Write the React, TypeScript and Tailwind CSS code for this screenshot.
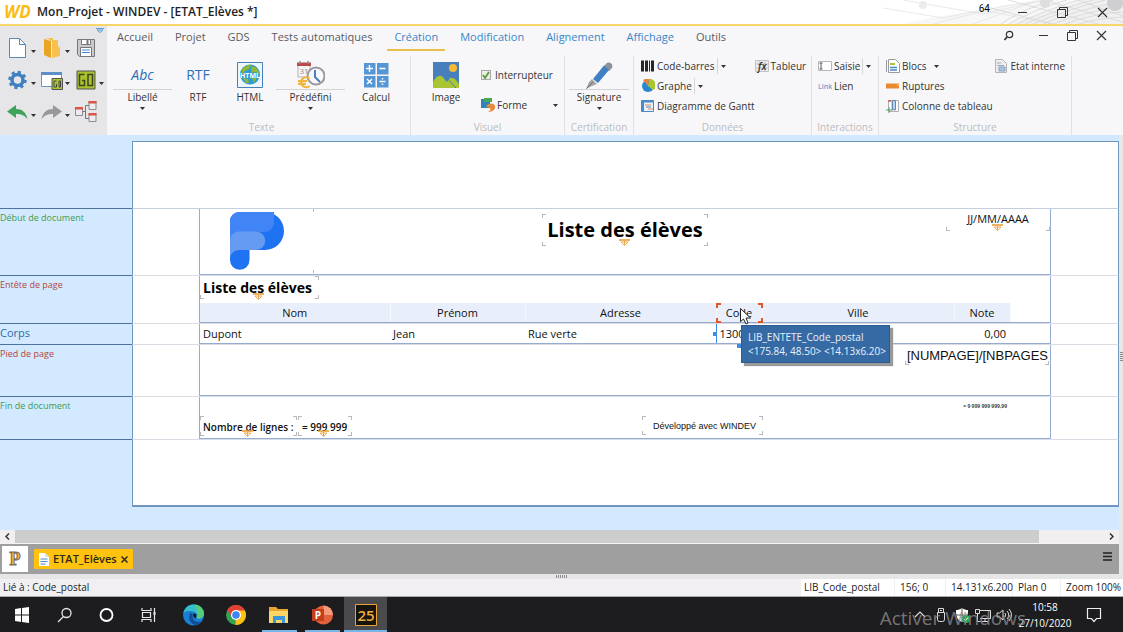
import type { ReactNode } from "react";
import clsx from "clsx";

const TABS = [
  { label: "Accueil" },
  { label: "Projet" },
  { label: "GDS" },
  { label: "Tests automatiques" },
  { label: "Création", context: true, active: true },
  { label: "Modification", context: true },
  { label: "Alignement", context: true },
  { label: "Affichage", context: true },
  { label: "Outils" },
];

function Caret({ className }: { className?: string }) {
  return (
    <svg viewBox="0 0 5 3" className={clsx("h-[3px] w-[5px] shrink-0", className)}>
      <path d="M0 0h5L2.500 3z" fill="#333" />
    </svg>
  );
}

function WindowButtons({ className }: { className?: string }) {
  return (
    <div className={clsx("flex items-center text-[#333]", className)}>
      <button aria-label="Réduire" className="flex flex-1 justify-center">
        <svg viewBox="0 0 11 11" className="size-[11px]" stroke="currentColor" fill="none">
          <path d="M1 5.500h9" />
        </svg>
      </button>
      <button aria-label="Restaurer" className="flex flex-1 justify-center">
        <svg viewBox="0 0 11 11" className="size-[11px]" stroke="currentColor" fill="none">
          <path d="M.5 2.500h8v8h-8zM2.500 2.500v-2h8v8h-2" />
        </svg>
      </button>
      <button aria-label="Fermer" className="flex flex-1 justify-center">
        <svg viewBox="0 0 11 11" className="size-[11px]" stroke="currentColor" fill="none">
          <path d="M1 1l9 9M10 1l-9 9" strokeWidth="1.200" />
        </svg>
      </button>
    </div>
  );
}

function TitleBar() {
  return (
    <header className="relative flex h-[26px] items-center border-b-2 border-[#f5d56c] bg-white pl-1">
      <svg viewBox="0 0 240 24" className="absolute top-0 right-0 h-6 w-[240px]" fill="none" stroke="#e3e3e5" strokeWidth=".8">
        <path d="M20 24C60 14 120 8 150 0h90v24z" fill="#f7f7f8" stroke="none" />
        <path d="M130 24C150 14 180 8 200 0h40v24z" fill="#f0f0f1" stroke="none" />
        <path d="M0 8l60 10 40-8 70 14M20 0l80 14 60-14M50 24l70-18 50-6M90 24L150 2" />
        <path d="M118 24q20-14 52-24M126 24q24-14 58-24M134 24q28-14 62-24M142 24q30-14 68-24M150 24q32-14 72-24M160 24q32-14 76-22M170 24q32-12 70-18M182 24q26-10 58-12M196 24q20-6 44-7M100 6l70 18M125 0l90 24M160 0l80 22M195 0l45 16" stroke="#d6d6d8" />
        <circle cx="232" cy="3" r="8" fill="#cfcfd1" stroke="none" />
        <circle cx="162" cy="3" r="5" fill="#dededf" stroke="none" />
        <circle cx="40" cy="5" r="4" fill="#ececee" stroke="none" />
      </svg>
      <span className="w-[33px] text-[17px] leading-6 font-bold text-[#fbbc14] italic">WD</span>
      <h1 className="flex-1 text-[12px] font-semibold text-[#222]">Mon_Projet - WINDEV - [ETAT_Elèves *]</h1>
      <span className="relative mr-3 mb-2 font-['Roboto'] text-[10px] text-black">64</span>
      <WindowButtons className="relative w-[121px] pr-px" />
    </header>
  );
}

function QuickItem({ label, caret, children }: { label: string; caret?: boolean; children: ReactNode }) {
  return (
    <button aria-label={label} className="flex items-center gap-[2px]">
      <svg viewBox="0 0 22 22" className="size-[22px]" fill="none">
        {children}
      </svg>
      {caret && <Caret className="mt-[6px]" />}
    </button>
  );
}

function QuickPanel() {
  return (
    <div className="relative w-[107px] shrink-0 bg-[#e6e6e9] pt-[11px] pl-[7px]">
      <svg viewBox="0 0 8 5" className="absolute top-[2px] right-[3px] h-[5px] w-2" fill="none">
        <path d="M0 .5h8M1 2h6L4 4.500z" stroke="#5a9bd8" />
      </svg>
      <div className="grid grid-cols-[34px_34px_34px] gap-y-[10px]">
        <QuickItem label="Nouveau" caret>
          <path d="M2.500 1.500h10l6 6v13h-16z" fill="#fff" stroke="#5a87bb" />
          <path d="M12.500 1.500v6h6" stroke="#5a87bb" />
        </QuickItem>
        <QuickItem label="Ouvrir" caret>
          <path d="M3 2l7 2v17l-7-3z" fill="#e9a426" />
          <path d="M5 1h7v2h5v6l2 2v8l-8 2V4z" fill="#f7c14f" />
        </QuickItem>
        <QuickItem label="Enregistrer">
          <path d="M2.500 2.500h17v17h-15l-2-2z" fill="#c9c9cc" stroke="#77777b" />
          <path d="M6.500 2.500h9v5h-9zM5.500 10.500h11v9h-11z" fill="#fff" stroke="#77777b" />
          <path d="M12.500 3v4" stroke="#77777b" strokeWidth="2" />
          <path d="M7 13h8M7 15.500h8" stroke="#4a86c5" />
        </QuickItem>
        <QuickItem label="Options" caret>
          <circle cx="10.500" cy="11" r="5.500" stroke="#3e80c0" strokeWidth="3.500" />
          <circle cx="10.500" cy="11" r="8" stroke="#3e80c0" strokeWidth="2.500" strokeDasharray="3.140 3.140" />
        </QuickItem>
        <QuickItem label="Tester la fenêtre" caret>
          <path d="M.5 3.500h20v14H.5z" fill="#fff" stroke="#6f93bd" />
          <path d="M0 3h21v3H0z" fill="#5d8fc6" />
          <path d="M11 9.500h10.500v11H11z" fill="#a8c62f" stroke="#555" />
          <path d="M15.500 12H13v6h2.500v-3M18 12h1.500v6H18z" stroke="#444" />
        </QuickItem>
        <QuickItem label="Tester le projet" caret>
          <path d="M2 2h18v18H2z" fill="#a9c32c" stroke="#555" />
          <path d="M9.500 5.500h-5v11h5v-5H7M13 5.500h4.500v11H13z" stroke="#3f431f" strokeWidth="1.500" />
        </QuickItem>
        <QuickItem label="Annuler" caret>
          <path d="M0 10.500L9 4v4c6 0 10 3 11.500 10C17 14 14 13 9 13v4z" fill="#3fa35a" />
        </QuickItem>
        <QuickItem label="Rétablir" caret>
          <path d="M21 10.500L12 4v4C6 8 2 11 .5 18 4 14 7 13 12 13v4z" fill="#98989b" />
        </QuickItem>
        <QuickItem label="Arborescence">
          <path d="M.5 6.500h7v8h-7zM14 .5h7v8h-7zM14 12.500h7v8h-7z" fill="#ececee" stroke="#8c8c90" />
          <path d="M0 6h8v2.500H0zM13.500 0h8v2.500h-8zM13.500 12h8v2.500h-8z" fill="#dd5346" />
          <path d="M8 10.500h2.500M14 4.500h-3.500v13h3.500" stroke="#777" />
        </QuickItem>
      </div>
    </div>
  );
}

type BigButtonProps = { label: string; caret?: boolean; className?: string; children: ReactNode };

function BigButton({ label, caret, className, children }: BigButtonProps) {
  return (
    <button className={clsx("flex flex-col items-center pt-1 text-[10px] text-[#333]", className)}>
      <span
        className={clsx(
          "flex h-[30px] w-full items-center justify-center border-b",
          caret ? "border-[#d3d3d6]" : "border-transparent",
        )}
      >
        {children}
      </span>
      <span className="leading-[14px]">{label}</span>
      {caret && <Caret className="mt-[3px]" />}
    </button>
  );
}

function SmallButton({ label, caret, split, className, children }: BigButtonProps & { split?: boolean }) {
  return (
    <button className={clsx("flex h-5 items-center gap-[2px] text-[10px] whitespace-nowrap text-[#333]", className)}>
      <svg viewBox="0 0 14 14" className="size-[14px] shrink-0" fill="none">
        {children}
      </svg>
      <span>{label}</span>
      {caret && (
        <span className={clsx("flex h-4 items-center pl-[3px]", split ? "border-l border-[#d5d5d8]" : "ml-[2px]")}>
          <Caret />
        </span>
      )}
    </button>
  );
}

function Group({ title, className, children }: { title: string; className?: string; children: ReactNode }) {
  return (
    <section className={clsx("flex flex-col border-r border-[#e1e1e4]", className)}>
      <div className="flex h-16">{children}</div>
      <h2 className="text-center text-[10px] leading-[14px] text-[#bcbcc0]">{title}</h2>
    </section>
  );
}

function Ribbon() {
  return (
    <div className="flex h-[109px] bg-[#f7f7f9]">
      <QuickPanel />
      <div className="min-w-0 flex-1">
        <div className="flex h-[26px] items-start">
          <nav className="flex flex-1 gap-2 pl-[3px]">
            {TABS.map((tab) => (
              <a
                key={tab.label}
                href="#"
                className={clsx(
                  "h-[25px] border-b-2 px-[7px] text-[11px] leading-[22px] whitespace-nowrap",
                  tab.active ? "border-[#e8bf4d]" : "border-transparent",
                  tab.context ? "text-[#3a85c8]" : "text-[#5b5b5f]",
                )}
              >
                {tab.label}
              </a>
            ))}
          </nav>
          <button aria-label="Rechercher" className="mt-1 mr-[15px]">
            <svg viewBox="0 0 11 11" className="size-[11px]" fill="none" stroke="#333" strokeWidth="1.200">
              <circle cx="6.500" cy="4.500" r="3.200" />
              <path d="M4 7L1.500 10" strokeWidth="1.800" />
            </svg>
          </button>
          <WindowButtons className="w-[94px] pt-1 pr-[7px]" />
        </div>
        <div className="flex h-[83px] pt-1">
          <Group title="Texte" className="w-[304px] pl-[6px]">
            <BigButton label="Libellé" caret className="w-[59px]">
              <span className="text-sm text-[#2f6fb7] italic">Abc</span>
            </BigButton>
            <BigButton label="RTF" className="w-[52px]">
              <span className="text-sm text-[#2f6fb7]">RTF</span>
            </BigButton>
            <BigButton label="HTML" className="w-[52px]">
              <svg viewBox="0 0 26 26" className="size-[26px]">
                <path d="M.5.5h25v25H.5z" fill="#eef6fc" stroke="#477fb8" />
                <circle cx="13" cy="12.500" r="10" fill="#2f9ad6" />
                <path d="M5 7c3-4 8-5 9-4l-2 4-4 2-3 3zM15 4c5 1 7 5 7 8l-4-2-3 1-1-4zM6 16l5 1 1 4-3 0zM15 16l5-1-3 6z" fill="#8fb935" />
                <text x="13" y="15.500" textAnchor="middle" fontSize="7" fontWeight="700" fill="#fff">HTML</text>
              </svg>
            </BigButton>
            <BigButton label="Prédéfini" caret className="w-[69px]">
              <svg viewBox="0 0 28 28" className="size-7" fill="none">
                <path d="M1 3h12v13H1z" fill="#f5f5f5" stroke="#b5b5b8" />
                <path d="M0 1.500h14v3.500H0z" fill="#b94a48" />
                <path d="M3 0v3M11 0v3" stroke="#8a8a8e" strokeWidth="1.500" />
                <text x="7" y="12.500" textAnchor="middle" fontSize="8" fill="#8b8b90">31</text>
                <circle cx="19" cy="15" r="8.500" fill="#f8f8fa" stroke="#9a9a9f" strokeWidth="2" />
                <path d="M18 9v7l5 5" stroke="#4a80bd" strokeWidth="2" />
                <path d="M12.500 17.500A5 5 0 1 0 12.500 25M1 20h9M1 22.800h8" stroke="#f2b33a" strokeWidth="2.200" />
              </svg>
            </BigButton>
            <BigButton label="Calcul" className="w-[62px]">
              <svg viewBox="0 0 26 26" className="size-[26px]" fill="none">
                <path d="M1 1h11.500v11.500H1zM14 1h11.500v11.500H14zM1 14h11.500v11.500H1zM14 14h11.500v11.500H14z" fill="#5596d6" />
                <path d="M6.500 3v7M3 6.500h7M16.500 6.500h6M4 17l5 5M9 17l-5 5M16.500 19.500h6M19.500 16v1.500M19.500 21.500V23" stroke="#fff" strokeWidth="1.400" />
              </svg>
            </BigButton>
          </Group>
          <Group title="Visuel" className="w-[154px]">
            <BigButton label="Image" className="w-[70px]">
              <svg viewBox="0 0 26 26" className="size-[26px]">
                <path d="M0 0h26v26H0z" fill="#477fbd" />
                <circle cx="20" cy="6" r="4" fill="#f5b933" />
                <path d="M0 26v-6c4-8 9-8 12-2l2 2c3-6 7-6 12 2v4z" fill="#a9c531" />
                <path d="M14 16l9 10" stroke="#477fbd" />
              </svg>
            </BigButton>
            <div className="flex flex-1 flex-col justify-between pt-[9px] pb-[5px]">
              <label className="flex h-5 items-center gap-1 text-[10px] text-[#333]">
                <span className="relative flex size-[10px]">
                  <input type="checkbox" defaultChecked className="size-[10px] appearance-none border border-[#a9a9ad] bg-[#e8eee2]" />
                  <svg viewBox="0 0 10 10" className="pointer-events-none absolute inset-0" fill="none">
                    <path d="M2 5l2 3 4-6" stroke="#5c9a3a" strokeWidth="1.800" />
                  </svg>
                </span>
                Interrupteur
              </label>
              <div className="flex items-center justify-between pr-[6px]">
                <SmallButton label="Forme">
                  <path d="M0 1h9v9H0z" fill="#2d82c0" />
                  <path d="M3 0h8v4H3z" fill="#4aa653" />
                  <path d="M5 9c1-4 8-5 9-1s-3 6-7 6c4-2 3-5-2-5z" fill="#e9893a" />
                </SmallButton>
                <Caret />
              </div>
            </div>
          </Group>
          <Group title="Certification" className="w-[69px] px-1">
            <BigButton label="Signature" caret className="w-full">
              <svg viewBox="0 0 28 28" className="size-7">
                <path d="M21 3c2-3 8-1 6 4l-3 3-6-4z" fill="#8f9297" />
                <path d="M19 4.500l5 4.500-11 13-5-4z" fill="#3f7fc3" />
                <path d="M7 18l5 5-5 2-6 3 3-7z" fill="#a3a5a9" />
                <path d="M1.500 27.500L8 21" stroke="#6d6f73" />
              </svg>
            </BigButton>
          </Group>
          <Group title="Données" className="w-[178px] pl-[7px] [&>h2]:-ml-[7px]">
            <div className="flex flex-col">
              <SmallButton label="Code-barres" caret split>
                <path d="M0 1.500h3v11H0zM4 1.500h3v11H4zM8 1.500h1v11H8zM10 1.500h3v11h-3z" fill="#26262a" />
              </SmallButton>
              <SmallButton label="Graphe" caret split>
                <circle cx="7" cy="7" r="6" fill="#2488cf" />
                <path d="M7 7l1-7A6 6 0 0 1 12 11z" fill="#a9c531" />
                <path d="M7 7L2 1a8 8 0 0 1 6-1z" fill="#ee8133" />
              </SmallButton>
              <SmallButton label="Diagramme de Gantt">
                <path d="M.5 1.500h12v11H.5z" fill="#e8f2fb" stroke="#4c8ac6" />
                <path d="M.5 2.500h12M2 1v12" stroke="#4c8ac6" strokeWidth="2" />
                <path d="M4 6h6M7 10h5" stroke="#e58a54" />
                <path d="M5 8h5" stroke="#4c8ac6" />
              </SmallButton>
            </div>
            <SmallButton label="Tableur" className="ml-auto pr-[6px]">
              <path d="M.5 1.500h13v11H.5zM.5 5h13M.5 9h13M4 1.500v11M10 1.500v11" fill="#eee" stroke="#c3c3c6" />
              <text x="3" y="11" fontSize="10" fontStyle="italic" fontWeight="600" fill="#333">fx</text>
            </SmallButton>
          </Group>
          <Group title="Interactions" className="w-[67px] pl-[6px] [&>h2]:-ml-[6px]">
            <div className="flex flex-col">
              <SmallButton label="Saisie" caret split>
                <path d="M.5 2.500h13v9H.5z" fill="#fff" stroke="#b7b7bb" />
                <path d="M1.500 4h3M3 4v6M1.500 10h3" stroke="#555" />
              </SmallButton>
              <SmallButton label="Lien">
                <text x="0" y="10" fontSize="7" fontWeight="600" fill="#6fa0d6">Link</text>
              </SmallButton>
            </div>
          </Group>
          <Group title="Structure" className="w-[193px] pl-[7px] [&>h2]:-ml-[7px]">
            <div className="flex flex-col">
              <SmallButton label="Blocs" caret>
                <path d="M.5 1v12M2.500 .5h7l4 4v9h-11z" fill="#fff" stroke="#9a9a9f" />
                <path d="M4 5h5" stroke="#a9c531" strokeWidth="2" />
                <path d="M4 8.500h7M4 11h7" stroke="#4a86c5" strokeWidth="1.500" />
              </SmallButton>
              <SmallButton label="Ruptures">
                <path d="M0 4.500h13v5H0z" fill="#e98a2e" />
                <path d="M11 6h2" stroke="#f7d08c" />
              </SmallButton>
              <SmallButton label="Colonne de tableau">
                <path d="M2.500 1.500h10v11h-10zM6 1v11M9 1v11" fill="#fff" stroke="#b0b0b5" />
                <path d="M6.500 1.500h3v9h-3z" fill="#bcd6ef" stroke="#5a86b8" />
                <path d="M3 8v6M0 11h6" stroke="#58a05e" />
                <path d="M2 2h3" stroke="#d05a4a" strokeWidth="1.500" />
              </SmallButton>
            </div>
            <SmallButton label="Etat interne" className="ml-auto pr-[6px]">
              <path d="M1.500 .5h7l4 4v9h-11z" fill="#eee" stroke="#b4b4b8" />
              <path d="M3 4h4M3 6.500h7" stroke="#98a8bc" />
              <path d="M5 8h6v4H5z" fill="#a9c3e2" stroke="#8aa0ba" />
            </SmallButton>
          </Group>
        </div>
      </div>
    </div>
  );
}

// Orange "extensible height" mark under a report field
function StretchMark({ className }: { className?: string }) {
  return (
    <svg viewBox="0 0 11 7" className={clsx("absolute h-[7px] w-[11px]", className)} fill="none" stroke="#e6982c">
      <path d="M0 1h11" strokeWidth="1.500" />
      <path d="M2 3h7L5.500 6.500zM5.500 2v4" strokeWidth=".8" />
    </svg>
  );
}

type FieldProps = { className: string; corners?: string; selected?: boolean; children?: ReactNode };

// Report field with the small corner ticks drawn by the editor
function Field({ className, corners = "tl tr bl br", selected, children }: FieldProps) {
  const tick = clsx("absolute", selected ? "size-[5px] border-[#e0562b]" : "size-1 border-[#b9b9bd]");
  return (
    <div className={clsx("absolute whitespace-nowrap", className)}>
      {corners.includes("tl") && <i className={clsx(tick, "top-0 left-0", selected ? "border-t-2 border-l-2" : "border-t border-l")} />}
      {corners.includes("tr") && <i className={clsx(tick, "top-0 right-0", selected ? "border-t-2 border-r-2" : "border-t border-r")} />}
      {corners.includes("bl") && <i className={clsx(tick, "bottom-0 left-0", selected ? "border-b-2 border-l-2" : "border-b border-l")} />}
      {corners.includes("br") && <i className={clsx(tick, "right-0 bottom-0", selected ? "border-r-2 border-b-2" : "border-r border-b")} />}
      {children}
    </div>
  );
}

function Band({ title, color, height, children }: { title: string; color: string; height: string; children: ReactNode }) {
  return (
    <section className={clsx("flex", height)}>
      <h3 className={clsx("w-[132px] shrink-0 border-b border-[#4f729f] pt-[2px] leading-[14px]", color)}>{title}</h3>
      <div className="flex-1 border-x border-b border-x-[#7096bf] border-b-[#d9dce2] pr-[67px] pl-[66px]">
        <div className="relative h-full border-x border-b border-[#96abd0] text-[11px] font-medium text-[#111]">
          {children}
        </div>
      </div>
    </section>
  );
}

function Columns() {
  return (
    <colgroup>
      <col className="w-[190px]" />
      <col className="w-[135px]" />
      <col className="w-[191px]" />
      <col className="w-[46px]" />
      <col className="w-[192px]" />
      <col className="w-[56px]" />
    </colgroup>
  );
}

function Workspace() {
  return (
    <main className="flex flex-1 bg-[#d3e9ff]">
      <div className="flex-1 pt-[6px]">
        <div className="flex h-[68px]">
          <div className="w-[132px] border-b border-[#4f729f]" />
          <div className="flex-1 border border-[#7096bf] border-b-[#c6cfde] bg-white" />
        </div>
        <div className="bg-[linear-gradient(90deg,#d3e9ff_132px,white_132px)]">
          <Band title="Début de document" color="text-[9px] text-[#3f9b4d]" height="h-[67px]">
            <Field className="top-0 left-0 h-[64px] w-[114px]" corners="">
              <i className="absolute top-0 right-0 h-[3px] border-r border-[#b9b9bd]" />
              <i className="absolute right-0 bottom-0 h-[3px] border-r border-[#b9b9bd]" />
              <svg viewBox="0 0 54 58" className="absolute top-[3px] left-[30px] h-[58px] w-[54px]">
                <path d="M9 0h26a19 19 0 0 1 0 38H19.500v10a9.750 9.750 0 0 1-19.500 0V9a9 9 0 0 1 9-9z" fill="#1f72f1" />
                <path d="M9 0h35v11a9 9 0 0 1-9 9H9a9 9 0 0 0-9 9V9a9 9 0 0 1 9-9z" fill="#4184f5" />
                <path d="M9 19.500h17a9.200 9.200 0 0 1 0 18.500H9a9 9 0 0 0-9 10V29a9 9 0 0 1 9-9.500z" fill="#659bf1" />
              </svg>
            </Field>
            <Field className="top-[5px] left-[342px] h-8 w-[166px] text-center text-xl leading-8 font-bold text-black">
              Liste des élèves
              <StretchMark className="bottom-0 left-[77px]" />
            </Field>
            <Field className="top-0 right-0 h-[22px] w-[104px] text-center leading-5" corners="bl br">
              JJ/MM/AAAA
              <StretchMark className="bottom-0 left-[46px]" />
            </Field>
          </Band>
          <Band title="Entête de page" color="text-[9px] text-[#b3453c]" height="h-[48px]">
            <Field className="top-0 left-0 h-[23px] w-[119px] pl-[3px] text-[14px] leading-6 font-bold text-black" corners="tr bl br">
              Liste des élèves
              <StretchMark className="bottom-[-1px] left-[53px]" />
            </Field>
            <div className="pt-[27px]">
              <table className="w-[810px] table-fixed">
                <Columns />
                <thead className="bg-[#e8effb]">
                  <tr className="h-[19px] [&>th]:border-r [&>th]:border-[#f5f8fd] [&>th]:p-0 [&>th]:leading-[19px] [&>th]:font-medium">
                    <th>Nom</th>
                    <th>Prénom</th>
                    <th>Adresse</th>
                    <th>Code</th>
                    <th>Ville</th>
                    <th>Note</th>
                  </tr>
                </thead>
              </table>
            </div>
            <Field className="top-[27px] left-[516px] h-5 w-[47px]" selected />
          </Band>
          <Band title="Corps" color="text-[11px] font-medium text-[#2f6da8]" height="h-[21px]">
            <table className="w-[810px] table-fixed">
              <Columns />
              <tbody>
                <tr className="h-[19px] [&>td]:py-0 [&>td]:pl-[3px] [&>td]:leading-[19px]">
                  <td>Dupont</td>
                  <td>Jean</td>
                  <td>Rue verte</td>
                  <td className="border-l border-[#3d8de8]">13000</td>
                  <td />
                  <td className="pr-1 text-right">0,00</td>
                </tr>
              </tbody>
            </table>
            <i className="absolute top-2 left-[513px] size-1 bg-[#3d8de8]" />
            <i className="absolute top-[20px] left-[537px] size-1 bg-[#3d8de8]" />
            <div className="absolute top-[1px] left-[541px] z-10 border border-[#2b5c92] bg-[#356aa5] py-[4px] pr-[3px] pl-[6px] text-[10px] leading-[14px] font-normal whitespace-nowrap text-[#e9f1fa] shadow-[3px_3px_1px_#999]">
              <p>LIB_ENTETE_Code_postal</p>
              <p>&lt;175.84, 48.50&gt; &lt;14.13x6.20&gt;</p>
            </div>
            <svg viewBox="0 0 11 17" className="absolute top-[-16px] left-[540px] z-20 h-[17px] w-[11px]">
              <path d="M.5.5v13l3-2.500 2.500 5 2-1-2-5h4.500z" fill="#fff" stroke="#222" />
            </svg>
          </Band>
          <Band title="Pied de page" color="text-[9px] text-[#b3453c]" height="h-[52px]">
            <Field
              className="top-0 right-[1px] h-[20px] w-[144px] pr-[1px] text-right font-['Liberation_Sans'] text-[13px] leading-[21px] font-normal"
              corners="bl br"
            >
              [NUMPAGE]/[NBPAGES
            </Field>
          </Band>
          <Band title="Fin de document" color="text-[9px] text-[#3f9b4d]" height="h-[43px]">
            <Field className="top-[19px] left-0 h-5 w-[97px] pl-[3px] text-[10px] leading-[22px] font-semibold">
              Nombre de lignes :
              <StretchMark className="bottom-[-1px] left-[42px]" />
            </Field>
            <Field className="top-[19px] left-[98px] h-5 w-[54px] pl-1 text-[10px] leading-[22px] font-semibold">
              = 999 999
              <StretchMark className="bottom-[-1px] left-[20px]" />
            </Field>
            <Field className="top-[19px] left-[442px] h-[19px] w-[121px] pl-[11px] font-['Liberation_Sans'] text-[9px] leading-5 font-normal">
              Développé avec WINDEV
            </Field>
            <Field className="top-[6px] right-[43px] text-[5px] leading-[7px] font-semibold" corners="">
              = 9 999 999 999,99
            </Field>
          </Band>
        </div>
        <div className="flex h-[67px]">
          <div className="w-[132px]" />
          <div className="flex-1 border-x border-b-2 border-[#7096bf] bg-white" />
        </div>
      </div>
      <div className="flex w-1 flex-col items-end justify-center gap-px bg-[#e8e8ea] pt-[48px]">
        <i className="h-px w-[3px] bg-[#8a8a8d]" />
        <i className="h-px w-[3px] bg-[#8a8a8d]" />
        <i className="h-px w-[3px] bg-[#8a8a8d]" />
        <i className="h-px w-[3px] bg-[#8a8a8d]" />
        <i className="h-px w-[3px] bg-[#8a8a8d]" />
      </div>
    </main>
  );
}

function BottomBars() {
  return (
    <div className="bg-[#e8e8ea]">
      <div className="mr-1 flex h-[14px] items-stretch border-b border-[#f4f4f4] bg-[#f1eff0]">
        <button aria-label="Défiler à gauche" className="flex w-[15px] items-center justify-center">
          <svg viewBox="0 0 5 7" className="h-[7px] w-[5px]" fill="none" stroke="#333" strokeWidth="1.500">
            <path d="M4 .5l-3 3 3 3" />
          </svg>
        </button>
        <div className="flex-1 bg-[#cdcdcd]" />
        <div className="w-[65px]" />
        <button aria-label="Défiler à droite" className="flex w-[15px] items-center justify-center">
          <svg viewBox="0 0 5 7" className="h-[7px] w-[5px]" fill="none" stroke="#333" strokeWidth="1.500">
            <path d="M1 .5l3 3-3 3" />
          </svg>
        </button>
      </div>
      <div className="mr-1 flex h-[30px] items-center bg-[#9f9fa0] pl-[2px]">
        <button aria-label="Projet" className="flex h-[26px] w-[26px] items-center justify-center bg-white">
          <span className="font-['Liberation_Serif'] text-[18px] font-bold text-[#f2b34a] [-webkit-text-stroke:1px_#7a6a55]">P</span>
        </button>
        <div className="ml-[6px] flex h-5 items-center gap-1 rounded-[1px] bg-[#ffc20e] px-[5px] text-[11px] font-semibold text-[#2d2a1a]">
          <svg viewBox="0 0 10 13" className="h-[13px] w-[10px]">
            <path d="M0 0h6l4 4v9H0z" fill="#fff" />
            <path d="M6 0v4h4" fill="#d5dfea" />
            <path d="M1.500 6h7M1.500 8.500h7M1.500 11h5" stroke="#4a86c5" />
          </svg>
          <span>ETAT_Elèves</span>
          <button aria-label="Fermer l'onglet">
            <svg viewBox="0 0 7 7" className="size-[7px]" stroke="#2d2a1a" strokeWidth="1.500">
              <path d="M.5.5l6 6M6.500.5l-6 6" />
            </svg>
          </button>
        </div>
        <button aria-label="Menu" className="mr-[7px] mb-[6px] ml-auto">
          <svg viewBox="0 0 9 9" className="size-[9px]" stroke="#222" strokeWidth="1.500">
            <path d="M0 1h9M0 4.500h9M0 8h9" />
          </svg>
        </button>
      </div>
      <div className="flex h-[5px] items-center justify-center gap-px bg-[#e6e6e7]">
        {[0, 1, 2, 3, 4, 5].map((n) => (
          <i key={n} className="h-[3px] w-px bg-[#8f8f92]" />
        ))}
      </div>
      <footer className="flex h-[18px] items-stretch border-b border-[#aaa] bg-[#f1eff1] pl-[3px] text-[10px] leading-[17px] whitespace-nowrap text-[#222]">
        <span className="flex-1">Lié à : Code_postal</span>
        <div className="flex gap-px [&>span]:bg-white">
          <span className="w-[93px] pl-[3px]">LIB_Code_postal</span>
          <span className="w-[50px] pl-[5px]">156; 0</span>
          <span className="w-[66px] pl-[5px]">14.131x6.200</span>
          <span className="w-[47px] pl-[5px]">Plan 0</span>
          <span className="w-[62px] pl-[5px]">Zoom 100%</span>
        </div>
      </footer>
    </div>
  );
}

function TaskItem({ label, open, active, children }: { label: string; open?: boolean; active?: boolean; children: ReactNode }) {
  return (
    <button aria-label={label} className={clsx("relative flex w-[43px] items-center justify-center", active && "bg-[#4a4a4d]")}>
      <svg viewBox="0 0 22 22" className="size-[22px]" fill="none">
        {children}
      </svg>
      {open && <i className={clsx("absolute bottom-0 h-[2px] bg-[#76b5e8]", active ? "w-full" : "w-[35px]")} />}
    </button>
  );
}

function Taskbar() {
  return (
    <div className="relative flex h-[35px] bg-[#1d1c1e] text-white">
      <TaskItem label="Démarrer">
        <path d="M4 5l6-1v6.500H4zM11 3.900L18 3v7.500h-7zM4 11.500h6V18l-6-1zM11 11.500h7V19l-7-.9z" fill="#fff" />
      </TaskItem>
      <TaskItem label="Rechercher">
        <circle cx="12.500" cy="9" r="4.500" stroke="#e8e8e8" strokeWidth="1.300" />
        <path d="M9.500 12.500L4 18" stroke="#e8e8e8" strokeWidth="1.300" />
      </TaskItem>
      <TaskItem label="Cortana">
        <circle cx="9.500" cy="11" r="6" stroke="#fff" strokeWidth="1.800" />
      </TaskItem>
      <TaskItem label="Affichage des tâches">
        <path d="M2 4v2.500h9V4M2 18v-2.500h9V18M2.500 8.500h8v5h-8zM14.500 4v14" stroke="#e8e8e8" strokeWidth="1.200" />
        <path d="M13.500 8h2v3h-2z" fill="#e8e8e8" />
      </TaskItem>
      <TaskItem label="Edge">
        <circle cx="10.500" cy="11" r="10.500" fill="#1b7fd3" />
        <path d="M.5 9C1.500 3 6.500 .5 10.500 .5c7 0 10.500 5 10.500 9 0 4-4 6-7.500 4.500 1-2 1-5-3-6.500-4-1-8-.5-10 1.500z" fill="#35bfcc" />
        <path d="M11.500 .6c6 .4 9.500 5 9.500 9 0 4-4 6-7.500 4.500 2-4 1-8-2-13.500z" fill="#55cd7c" />
        <path d="M7.500 9c-3 4-1 11 5 12 3 0 6-2 7-4-4 2-10 1-10-5 0-2 0-3-2-3z" fill="#134e97" />
        <path d="M10 11c0-2 3-2 3.500 0 0 2-1 2.500-.5 3.500-1.500-.5-3-2-3-3.500z" fill="#1d1c1e" />
      </TaskItem>
      <TaskItem label="Chrome">
        <circle cx="10" cy="11" r="10" fill="#34a353" />
        <path d="M10 11L1.300 6A10 10 0 0 1 18.700 6z" fill="#e34133" />
        <path d="M10 11V6.500h8.900A10 10 0 0 1 9.500 21z" fill="#fbc116" />
        <path d="M1.300 6l5 7.500 3.700-2.500V6.500z" fill="#e34133" />
        <circle cx="10" cy="11" r="5" fill="#fff" />
        <circle cx="10" cy="11" r="3.800" fill="#4285f0" />
      </TaskItem>
      <TaskItem label="Explorateur de fichiers" open>
        <path d="M0 3h7l2 2h10v4H0z" fill="#e5a82c" />
        <path d="M0 7h19v12H0z" fill="#fbd667" />
        <path d="M4 19v-7h12v7h-3v-3H7v3z" fill="#3d96d8" />
      </TaskItem>
      <TaskItem label="PowerPoint" open>
        <circle cx="11.500" cy="11" r="9.500" fill="#e2613d" />
        <path d="M11.500 1.500a9.500 9.500 0 0 1 9.500 9.500h-9.500z" fill="#f59a7b" />
        <path d="M0 5h12v12H0z" fill="#c43e1c" />
        <text x="6" y="14.500" textAnchor="middle" fontSize="10" fontWeight="700" fill="#fff">P</text>
      </TaskItem>
      <TaskItem label="WINDEV 25" open active>
        <path d="M.5.5h21v21H.5z" fill="#17130d" stroke="#e8a33a" />
        <text x="11" y="16.500" textAnchor="middle" fontSize="15" fontWeight="600" fill="#f2ac3c">25</text>
      </TaskItem>

      <div className="ml-auto flex items-center gap-[5px] pr-[21px]">
        {/* chevron, clé USB, sécurité, réseau, volume */}
        <svg viewBox="0 0 16 16" className="size-4" fill="none" stroke="#ddd" strokeWidth="1.200">
          <path d="M3 10l5-5 5 5" />
        </svg>
        <svg viewBox="0 0 16 16" className="size-4" fill="none" stroke="#ddd">
          <path d="M5.500 5.500v-4h5v4M4.500 5.500h7v7a2 2 0 0 1-2 2h-3a2 2 0 0 1-2-2zM7 3.500h2" />
        </svg>
        <svg viewBox="0 0 16 16" className="size-4">
          <path d="M8 1c2 1.500 4 2 6 2 0 6-1 10-6 12C3 13 2 9 2 3c2 0 4-.5 6-2z" fill="#fff" />
          <path d="M8 1v14M2 8h12" stroke="#555" />
          <circle cx="12" cy="12" r="4" fill="#2fa84f" />
          <path d="M10 12l1.500 1.500L14 10.500" stroke="#fff" fill="none" />
        </svg>
        <svg viewBox="0 0 16 16" className="size-4" fill="none" stroke="#ddd">
          <path d="M4 3.500h11.500v8H5M7 14.500h6M10 12v2.500M.5 2.500h4v4h-4zM2.500 7v7.500h3" />
        </svg>
        <svg viewBox="0 0 16 16" className="size-4" fill="none" stroke="#ddd">
          <path d="M1 6h2.500L7 3v10l-3.500-3H1zM9 6q1.500 2 0 4M11 4q3.500 4 0 8M13 2q5 6 0 12" />
        </svg>
        <div className="w-[56px] text-center text-[10px] leading-4">
          <p>10:58</p>
          <p>27/10/2020</p>
        </div>
        <button aria-label="Notifications" className="ml-[8px]">
          <svg viewBox="0 0 16 16" className="size-4" fill="none" stroke="#eee" strokeWidth="1.200">
            <path d="M1.500 1.500h13v10h-4l-2.500 3-2.500-3h-4z" />
          </svg>
        </button>
      </div>
      <p className="pointer-events-none absolute right-[97px] bottom-0 text-[19px] leading-7 whitespace-nowrap text-[#8d8d90]/80">
        Activer Windows
      </p>
    </div>
  );
}

export default function App() {
  return (
    <div className="flex min-h-screen flex-col overflow-hidden bg-[#d3e9ff] font-['Open_Sans','Noto_Sans',sans-serif]">
      <TitleBar />
      <Ribbon />
      <Workspace />
      <BottomBars />
      <Taskbar />
    </div>
  );
}
